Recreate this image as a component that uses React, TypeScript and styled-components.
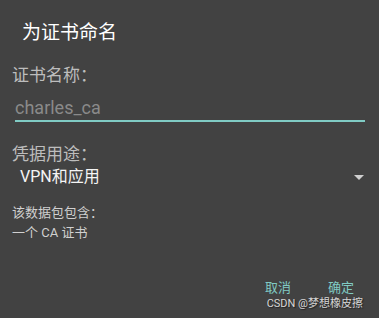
import React from 'react';
import styled, { createGlobalStyle } from 'styled-components';

const GlobalStyle = createGlobalStyle`
  html, body {
    margin: 0;
    padding: 0;
    background: #424242;
  }
`;

export default function App() {
  return (
    <>
      <GlobalStyle />
      <StyledDialog>
        <StyledTitle>为证书命名</StyledTitle>
        <StyledLabel>证书名称：</StyledLabel>
        <StyledInput>charles_ca</StyledInput>
        <StyledLabel $top={21}>凭据用途：</StyledLabel>
        <StyledSelect>
          <span>VPN和应用</span>
          <StyledArrow />
        </StyledSelect>
        <StyledInfo>
          <div>该数据包包含：</div>
          <div>一个 CA 证书</div>
        </StyledInfo>
        <StyledActions>
          <StyledButton>取消</StyledButton>
          <StyledButton>确定</StyledButton>
        </StyledActions>
        <StyledMark>CSDN @梦想橡皮擦</StyledMark>
      </StyledDialog>
    </>
  );
}

const StyledDialog = styled.div`
  width: 379px;
  height: 318px;
  box-sizing: border-box;
  background: #424242;
  font-family: Roboto, "Noto Sans CJK SC", sans-serif;
  display: flex;
  flex-direction: column;
  padding: 21px 14px 0 12px;
  overflow: hidden;
`;

const StyledTitle = styled.div`
  font-size: 19px;
  line-height: 24px;
  color: #ffffff;
  padding-left: 10px;
`;

const StyledLabel = styled.div<{ $top?: number }>`
  font-size: 17px;
  line-height: 22px;
  color: #bdbdbd;
  margin-top: ${(p) => p.$top ?? 19}px;
`;

const StyledInput = styled.div`
  margin: 11px 0 0 3px;
  font-size: 18px;
  line-height: 22px;
  color: #8a8a8a;
  border-bottom: 2px solid #80cbc4;
  padding-bottom: 1px;
`;

const StyledSelect = styled.div`
  display: flex;
  align-items: center;
  justify-content: space-between;
  margin-top: 1px;
  padding-left: 8px;
  font-size: 16px;
  line-height: 22px;
  color: #f5f5f5;
`;

const StyledArrow = styled.span`
  width: 0;
  height: 0;
  border-left: 5px solid transparent;
  border-right: 5px solid transparent;
  border-top: 5px solid #cfcfcf;
  margin-right: 1px;
`;

const StyledInfo = styled.div`
  margin-top: 15px;
  font-size: 13px;
  line-height: 20px;
  color: #d0d0d0;
`;

const StyledActions = styled.div`
  display: flex;
  justify-content: flex-end;
  gap: 37px;
  margin-top: 36px;
  padding-right: 11px;
`;

const StyledButton = styled.span`
  font-size: 13px;
  line-height: 18px;
  color: #80cbc4;
`;

const StyledMark = styled.div`
  align-self: flex-end;
  margin-right: 2px;
  font-size: 11px;
  line-height: 14px;
  color: #d6d6d6;
  text-shadow: 1px 1px 1px #222;
`;
